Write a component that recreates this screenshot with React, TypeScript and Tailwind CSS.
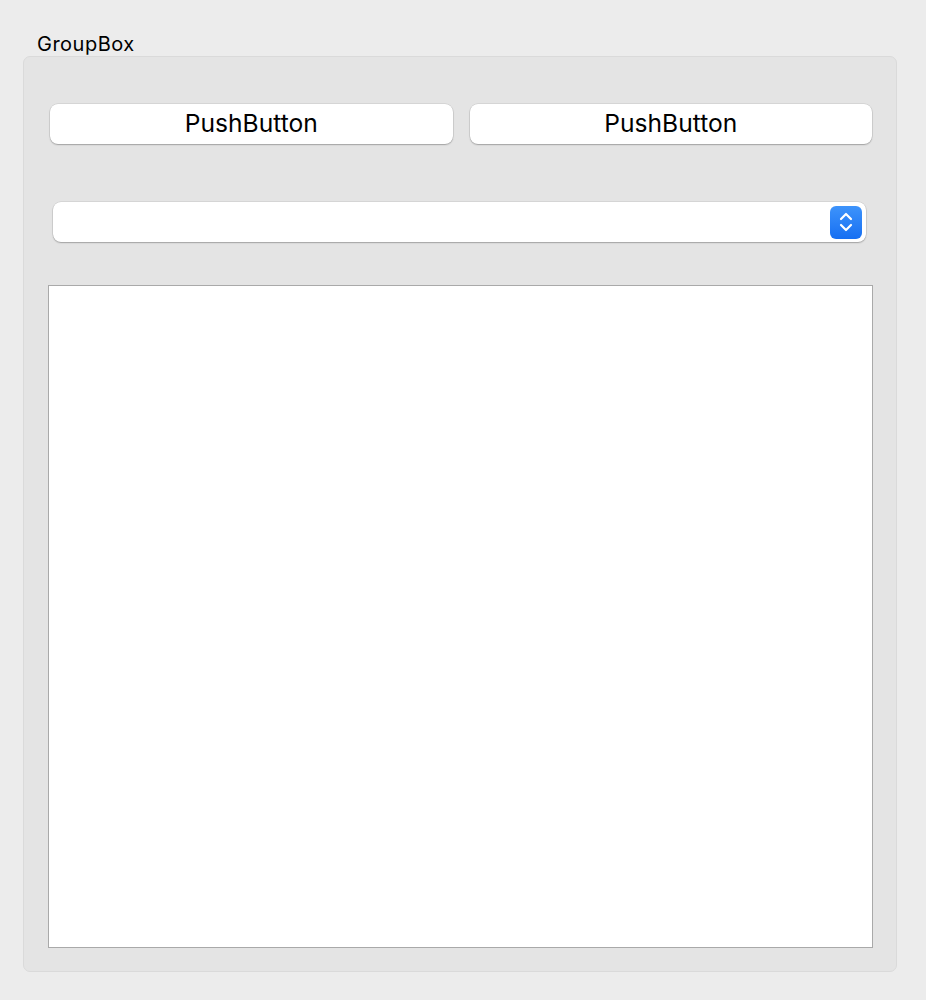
function PushButton() {
  return (
    <button
      type="button"
      className="h-[40px] rounded-[8px] bg-white pb-[1px] text-[24.6px] text-black leading-none shadow-[0_1px_1.5px_rgba(0,0,0,0.25),0_0_0_0.5px_rgba(0,0,0,0.12)]"
    >
      PushButton
    </button>
  );
}

function ComboBox() {
  return (
    <div className="flex h-[40px] items-center justify-end rounded-[8px] bg-white pr-[4px] shadow-[0_1px_1.5px_rgba(0,0,0,0.25),0_0_0_0.5px_rgba(0,0,0,0.12)]">
      <div className="flex h-[33px] w-[32px] items-center justify-center rounded-[6px] bg-gradient-to-b from-[#3d93fb] to-[#166ff2]">
        <svg width="16" height="22" viewBox="0 0 16 22" fill="none">
          <path d="M3 8 L8 3 L13 8" stroke="white" strokeWidth="2.2" strokeLinecap="round" strokeLinejoin="round" />
          <path d="M3 14 L8 19 L13 14" stroke="white" strokeWidth="2.2" strokeLinecap="round" strokeLinejoin="round" />
        </svg>
      </div>
    </div>
  );
}

export default function App() {
  return (
    <div className="h-[1000px] w-[926px] bg-[#ececec] pt-[32px] font-['Inter',sans-serif]">
      <div className="ml-[37px] h-[24px] text-[20px] leading-[24px] tracking-[0.5px] text-black">GroupBox</div>
      <div className="ml-[23px] flex h-[916px] w-[874px] flex-col rounded-[7px] border border-[#dadada] bg-[#e4e4e4] pt-[47px]">
        <div className="grid grid-cols-2 gap-[17px] pl-[26px] pr-[24px]">
          <PushButton />
          <PushButton />
        </div>
        <div className="mt-[58px] pl-[29px] pr-[30px]">
          <ComboBox />
        </div>
        <div className="mt-[43px] ml-[24px] mr-[23px] h-[663px] border border-[#a9a9a9] bg-white" />
      </div>
    </div>
  );
}
